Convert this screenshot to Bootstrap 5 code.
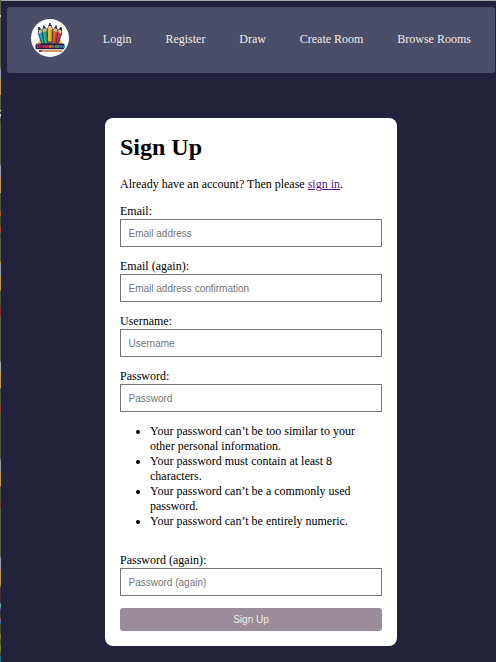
<!DOCTYPE html>
<html lang="en">
<head>
<meta charset="utf-8">
<meta name="viewport" content="width=device-width, initial-scale=1">
<title>Drawesome – Sign Up</title>
<link href="https://cdn.jsdelivr.net/npm/bootstrap@5.3.0/dist/css/bootstrap.min.css" rel="stylesheet">
<style>
body{background:#22223b;color:#000;font:12px/15px "Liberation Serif","Times New Roman",serif;height:662px;overflow:hidden;border-top:1px solid #a3abac;padding:6px 1px 0 7px}
.edge-strip{left:0;top:0;width:1px;height:662px;background:linear-gradient(#596049 0 15px,#ddd 15px 16px,#596049 18px 66px,#8fa0ae 72px 78px,#bd9f51 80px 95px,#596049 95px 110px,#ddd 110px 111px,#3d4140 112px 114px,#ddd 114px 115px,#3f4843 119px,#596049 126px 164px,#94a1aa 166px 176px,#bd9d55 178px 193px,#4b513b 193px 210px,#b96532 214px,#484b32 217px 225px,#984b28 227px 232px,#344149 234px,#596049 240px 260px,#b39553 263px,#8f9fae 266px 275px,#bd9f51 277px 290px,#4b513b 291px 305px,#742b2c 308px 315px,#596049 318px 360px,#a8aaa5 363px 370px,#bd9f51 373px 388px,#4b513b 389px 403px,#7b432b 406px 412px,#4c5240 414px 458px,#999ba5 461px 471px,#bd9f51 473px 486px,#4b513b 487px 500px,#67382b 504px,#596049 510px 555px,#969fab 559px 568px,#bd9f51 571px 584px,#40303b 588px 602px,#71a5a0 604px 607px,#3364a0 608px,#343640 611px 617px,#a45841 619px,#3267a0 622px,#42482c 626px 632px,#8e8430 636px,#42562c 642px,#8b8231 648px,#3c492b 655px,#236c8b 658px)}
.top-nav{height:66px;background:#4a4e69;border-radius:3px;padding:0 24px 2px}
.top-nav .nav-link{color:#f2e9e4;padding:0;line-height:15px;white-space:nowrap}
.logo{width:38px;height:38px;margin-top:-2px}
.signup-box{width:292px;height:528px;margin:45px 0 0 98px;padding:15px;background:#fff;border-radius:8px}
h1{font-size:24px;line-height:28px;font-weight:700;margin:0 0 16px}
.intro{margin:0 0 12px}
.intro a{color:#551a8b}
.field{margin-bottom:12px}
.field label{display:block;line-height:15px}
.field .form-control{height:28px;border:1px solid #767676;border-radius:0;padding:1px 7.5px 0;font:10px/normal "Liberation Sans",Arial,sans-serif}
.field .form-control::placeholder{color:#757575}
.rules{padding-left:30px;margin:0 0 24px}
.btn-signup{height:23px;padding:0;border:0;border-radius:3px;background:#9a8c98;color:#f2e9e4;font:10px/23px "Liberation Sans",Arial,sans-serif}
</style>
<script src="https://cdn.jsdelivr.net/npm/bootstrap@5.3.0/dist/js/bootstrap.bundle.min.js"></script>
</head>
<body>
<div class="edge-strip position-absolute"></div>
<nav class="top-nav d-flex align-items-center justify-content-between">
<a href="#" class="d-flex"><svg class="logo" viewBox="0 0 38 38" role="img" aria-label="Drawesome">
<defs>
<g id="pencil"><path d="M-2.600 6L0 0L2.600 6V19H-2.600Z" stroke="#182040" stroke-width=".7"/><path d="M-2.300 6L0 .8L2.300 6Z" fill="#efc08d"/><path d="M-1.300 3L0 0L1.300 3Z" fill="#20213d"/><path d="M1.300 7V19" stroke="#000" stroke-opacity=".25" stroke-width="1.200"/></g>
</defs>
<circle cx="19" cy="19" r="19" fill="#fff"/>
<path d="M7 25Q7 18 19 17Q31 18 31 25Z" fill="#ffb62d"/>
<use href="#pencil" fill="#1aa3d2" transform="translate(7.800 8) rotate(-19)"/>
<use href="#pencil" fill="#ef3b72" transform="translate(30.200 8) rotate(19)"/>
<use href="#pencil" fill="#27b078" transform="translate(12.800 6.500) rotate(-9)"/>
<use href="#pencil" fill="#f05a2b" transform="translate(25.200 6.500) rotate(9)"/>
<use href="#pencil" fill="#f6b62c" transform="translate(19 4)"/>
<rect x="4.500" y="24.500" width="29" height="5.800" rx="1.500" fill="#251b3b"/>
<text x="5.200" y="29.200" font-family="Liberation Sans,sans-serif" font-size="5.200" font-weight="700"><tspan fill="#f0305c">Draw</tspan><tspan fill="#f4b930">e</tspan><tspan fill="#48bd80">s</tspan><tspan fill="#f4b930">o</tspan><tspan fill="#35a9d0">me</tspan></text>
<path d="M8 32H11.500" stroke="#653a58" stroke-width="1.800"/><path d="M11.500 32H31" stroke="#d18d50" stroke-width="1.800"/>
</svg></a>
<a class="nav-link" href="#">Login</a>
<a class="nav-link" href="#">Register</a>
<a class="nav-link" href="#">Draw</a>
<a class="nav-link" href="#">Create Room</a>
<a class="nav-link" href="#">Browse Rooms</a>
</nav>
<main class="signup-box">
<h1>Sign Up</h1>
<p class="intro">Already have an account? Then please <a href="#">sign in</a>.</p>
<form>
<div class="field"><label for="email">Email:</label><input id="email" type="email" class="form-control" placeholder="Email address"></div>
<div class="field"><label for="email2">Email (again):</label><input id="email2" type="email" class="form-control" placeholder="Email address confirmation"></div>
<div class="field"><label for="username">Username:</label><input id="username" type="text" class="form-control" placeholder="Username"></div>
<div class="field"><label for="password1">Password:</label><input id="password1" type="password" class="form-control" placeholder="Password"></div>
<ul class="rules">
<li>Your password can’t be too similar to your other personal information.</li>
<li>Your password must contain at least 8 characters.</li>
<li>Your password can’t be a commonly used password.</li>
<li>Your password can’t be entirely numeric.</li>
</ul>
<div class="field"><label for="password2">Password (again):</label><input id="password2" type="password" class="form-control" placeholder="Password (again)"></div>
<button type="button" class="btn btn-signup d-block w-100">Sign Up</button>
</form>
</main>
</body>
</html>
